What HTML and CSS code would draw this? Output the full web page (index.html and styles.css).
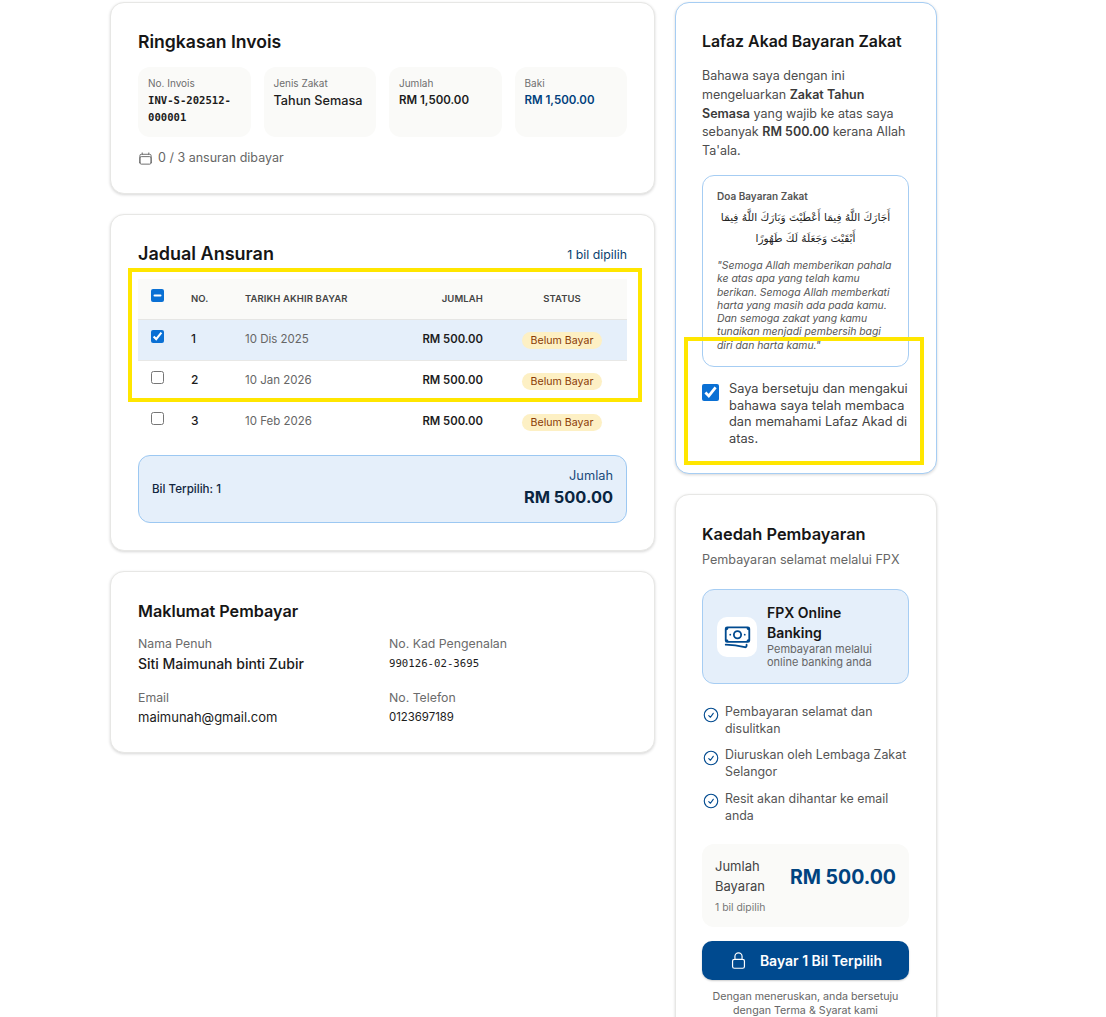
FILE: index.html
```html
<!DOCTYPE html>
<html lang="ms">
<head>
<meta charset="utf-8">
<title>Ringkasan Invois</title>
<link rel="stylesheet" href="styles.css">
</head>
<body>
<main class="page">
  <div class="col-left">
    <section class="card card-invoice">
      <h2 class="title">Ringkasan Invois</h2>
      <div class="tiles">
        <div class="tile"><div class="tile-label">No. Invois</div><div class="tile-value mono">INV-S-202512-000001</div></div>
        <div class="tile"><div class="tile-label">Jenis Zakat</div><div class="tile-value">Tahun Semasa</div></div>
        <div class="tile"><div class="tile-label">Jumlah</div><div class="tile-value strong">RM 1,500.00</div></div>
        <div class="tile"><div class="tile-label">Baki</div><div class="tile-value strong navy">RM 1,500.00</div></div>
      </div>
      <div class="progress">
        <svg class="cal" viewBox="0 0 24 24" width="15" height="15" fill="none" stroke="#666" stroke-width="1.5" stroke-linecap="round" stroke-linejoin="round"><path d="M6.75 3v2.25M17.25 3v2.25M3 18.75V7.5a2.25 2.25 0 0 1 2.25-2.25h13.5A2.25 2.25 0 0 1 21 7.5v11.25m-18 0A2.25 2.25 0 0 0 5.25 21h13.5A2.25 2.25 0 0 0 21 18.75m-18 0v-7.5A2.25 2.25 0 0 1 5.25 9h13.5A2.25 2.25 0 0 1 21 11.25v7.5"/></svg>
        <span>0 / 3 ansuran dibayar</span>
      </div>
    </section>

    <section class="card card-schedule">
      <div class="head-row">
        <h2 class="title title-lg">Jadual Ansuran</h2>
        <span class="head-note">1 bil dipilih</span>
      </div>
      <table class="table">
        <thead>
          <tr>
            <th class="c-check"><input type="checkbox" id="all" class="box"></th>
            <th class="c-no">NO.</th>
            <th class="c-date">TARIKH AKHIR BAYAR</th>
            <th class="c-amt">JUMLAH</th>
            <th class="c-status">STATUS</th>
          </tr>
        </thead>
        <tbody>
          <tr class="selected">
            <td class="c-check"><input type="checkbox" class="box" checked></td>
            <td class="c-no">1</td><td class="c-date">10 Dis 2025</td><td class="c-amt">RM 500.00</td>
            <td class="c-status"><span class="pill">Belum Bayar</span></td>
          </tr>
          <tr>
            <td class="c-check"><input type="checkbox" class="box"></td>
            <td class="c-no">2</td><td class="c-date">10 Jan 2026</td><td class="c-amt">RM 500.00</td>
            <td class="c-status"><span class="pill">Belum Bayar</span></td>
          </tr>
          <tr class="last">
            <td class="c-check"><input type="checkbox" class="box"></td>
            <td class="c-no">3</td><td class="c-date">10 Feb 2026</td><td class="c-amt">RM 500.00</td>
            <td class="c-status"><span class="pill">Belum Bayar</span></td>
          </tr>
        </tbody>
      </table>
      <div class="selection">
        <span class="sel-count">Bil Terpilih: 1</span>
        <div class="sel-total"><div class="sel-label">Jumlah</div><div class="sel-amount">RM 500.00</div></div>
      </div>
    </section>

    <section class="card card-payer">
      <h2 class="title title-sm">Maklumat Pembayar</h2>
      <div class="payer-grid">
        <div><div class="f-label">Nama Penuh</div><div class="f-value f-name">Siti Maimunah binti Zubir</div></div>
        <div><div class="f-label">No. Kad Pengenalan</div><div class="f-value mono f-ic">990126-02-3695</div></div>
        <div><div class="f-label">Email</div><div class="f-value">maimunah@gmail.com</div></div>
        <div><div class="f-label">No. Telefon</div><div class="f-value f-tel">0123697189</div></div>
      </div>
    </section>
  </div>

  <div class="col-right">
    <section class="card card-akad">
      <h2 class="title title-side">Lafaz Akad Bayaran Zakat</h2>
      <p class="akad-text">Bahawa saya dengan ini mengeluarkan <b>Zakat Tahun Semasa</b> yang wajib ke atas saya sebanyak <b>RM 500.00</b> kerana Allah Ta'ala.</p>
      <div class="doa">
        <div class="doa-label">Doa Bayaran Zakat</div>
        <p class="arabic" dir="rtl" lang="ar">أَجَارَكَ اللَّهُ فِيمَا أَعْطَيْتَ وَبَارَكَ اللَّهُ فِيمَا أَبْقَيْتَ وَجَعَلَهُ لَكَ طَهُورًا</p>
        <p class="doa-trans">"Semoga Allah memberikan pahala ke atas apa yang telah kamu berikan. Semoga Allah memberkati harta yang masih ada pada kamu. Dan semoga zakat yang kamu tunaikan menjadi pembersih bagi diri dan harta kamu."</p>
      </div>
      <label class="agree">
        <input type="checkbox" class="box box-lg" checked>
        <span>Saya bersetuju dan mengakui bahawa saya telah membaca dan memahami Lafaz Akad di atas.</span>
      </label>
    </section>

    <section class="card card-pay">
      <h2 class="title title-pay">Kaedah Pembayaran</h2>
      <p class="pay-sub">Pembayaran selamat melalui FPX</p>
      <div class="fpx">
        <div class="fpx-icon">
          <svg viewBox="0 0 24 24" width="29" height="29" fill="none" stroke="#004a8f" stroke-width="1.5" stroke-linecap="round" stroke-linejoin="round"><path d="M2.25 18.75a60.07 60.07 0 0 1 15.797 2.101c.727.198 1.453-.342 1.453-1.096V18.75M3.75 4.5v.75A.75.75 0 0 1 3 6h-.75m0 0v-.375c0-.621.504-1.125 1.125-1.125H20.25M2.25 6v9m18-10.5v.75c0 .414.336.75.75.75h.75m-1.5-1.5h.375c.621 0 1.125.504 1.125 1.125v9.75c0 .621-.504 1.125-1.125 1.125h-.375m1.5-1.5H21a.75.75 0 0 0-.75.75v.75m0 0H3.75m0 0h-.375a1.125 1.125 0 0 1-1.125-1.125V15m1.5 1.5v-.75A.75.75 0 0 0 3 15h-.75M15 10.5a3 3 0 1 1-6 0 3 3 0 0 1 6 0Zm3 0h.008v.008H18V10.5Zm-12 0h.008v.008H6V10.5Z"/></svg>
        </div>
        <div class="fpx-text">
          <div class="fpx-name">FPX Online Banking</div>
          <div class="fpx-desc">Pembayaran melalui online banking anda</div>
        </div>
      </div>
      <ul class="points">
        <li><svg class="tick" viewBox="0 0 24 24" width="18" height="18" fill="none" stroke="#004a8f" stroke-width="1.5" stroke-linecap="round" stroke-linejoin="round"><path d="M9 12.75 11.25 15 15 9.75M21 12a9 9 0 1 1-18 0 9 9 0 0 1 18 0Z"/></svg><span>Pembayaran selamat dan disulitkan</span></li>
        <li><svg class="tick" viewBox="0 0 24 24" width="18" height="18" fill="none" stroke="#004a8f" stroke-width="1.5" stroke-linecap="round" stroke-linejoin="round"><path d="M9 12.75 11.25 15 15 9.75M21 12a9 9 0 1 1-18 0 9 9 0 0 1 18 0Z"/></svg><span>Diuruskan oleh Lembaga Zakat Selangor</span></li>
        <li><svg class="tick" viewBox="0 0 24 24" width="18" height="18" fill="none" stroke="#004a8f" stroke-width="1.5" stroke-linecap="round" stroke-linejoin="round"><path d="M9 12.75 11.25 15 15 9.75M21 12a9 9 0 1 1-18 0 9 9 0 0 1 18 0Z"/></svg><span>Resit akan dihantar ke email anda</span></li>
      </ul>
      <div class="total">
        <div class="total-left">
          <div class="total-label">Jumlah Bayaran</div>
          <div class="total-note">1 bil dipilih</div>
        </div>
        <div class="total-amount">RM 500.00</div>
      </div>
      <button class="pay-btn" type="button">
        <svg viewBox="0 0 24 24" width="19" height="19" fill="none" stroke="#fff" stroke-width="1.5" stroke-linecap="round" stroke-linejoin="round"><path d="M16.5 10.5V6.75a4.5 4.5 0 1 0-9 0v3.75m-.75 11.25h10.5a2.25 2.25 0 0 0 2.25-2.25v-6.75a2.25 2.25 0 0 0-2.25-2.25H6.75a2.25 2.25 0 0 0-2.25 2.25v6.75a2.25 2.25 0 0 0 2.25 2.25Z"/></svg>
        <span>Bayar 1 Bil Terpilih</span>
      </button>
      <p class="fine">Dengan meneruskan, anda bersetuju dengan Terma &amp; Syarat kami</p>
    </section>
  </div>

  <div class="hl hl-table"></div>
  <div class="hl hl-agree"></div>
</main>
<script src="script.js"></script>
</body>
</html>
```

FILE: styles.css
```css
* { box-sizing: border-box; }
html, body { margin: 0; height: 1017px; overflow: hidden; background: #fff; }
body { font-family: Inter, "Noto Sans", sans-serif; color: #1c1c1c; font-size: 12px; }
h2, p, ul { margin: 0; padding: 0; }

.page { position: relative; display: flex; align-items: flex-start; gap: 20px; width: 827px; margin-left: 110px; padding-top: 2px; }
.col-left { width: 545px; display: flex; flex-direction: column; gap: 20px; flex: none; }
.col-right { width: 262px; display: flex; flex-direction: column; gap: 20px; flex: none; }

.card { background: #fff; border: 1px solid #e7e7e5; border-radius: 14px; box-shadow: 0 1px 3px rgba(0,0,0,.16); padding: 27px; }

.title { font-size: 17.6px; line-height: 24px; font-weight: 600; color: #161616; }
.title-lg { font-size: 18px; }
.title-sm { font-size: 16.2px; line-height: 22px; }
.title-side { font-size: 15.9px; line-height: 22px; }
.title-pay { font-size: 16.4px; line-height: 22px; }

.mono { font-family: "DejaVu Sans Mono", "Liberation Mono", monospace; }

.card-invoice { height: 192px; }
.tiles { display: grid; grid-template-columns: repeat(4, 1fr); gap: 13px; margin-top: 13px; }
.tile { background: #fafaf8; border-radius: 12px; padding: 9px 10px 10px; height: 70px; }
.tile-label { font-size: 10px; line-height: 14px; color: #6e6e6e; }
.tile-value { font-size: 12.7px; line-height: 17px; margin-top: 2px; color: #1c1c1c; font-weight: 500; }
.tile-value.mono { font-size: 10.6px; font-weight: 700; }
.tile-value.strong { font-size: 11.5px; font-weight: 600; }
.tile-value.navy { color: #00407c; }
.progress { display: flex; align-items: center; gap: 5px; margin-top: 12px; color: #666; font-size: 12.5px; line-height: 18px; }
.cal { flex: none; }

.card-schedule { height: 337px; }
.head-row { display: flex; justify-content: space-between; align-items: center; height: 24px; }
.head-note { font-size: 12.3px; color: #0a3f6e; font-weight: 400; }
.table { width: 489px; border-collapse: collapse; table-layout: fixed; margin-top: 13px; }
.table th { height: 40px; background: #fafaf8; border-bottom: 1px solid #e6e6e4; font-size: 9.5px; font-weight: 600; color: #444; letter-spacing: .1px; }
.table td { height: 41px; border-bottom: 1px solid #e8e8e6; font-size: 12px; }
.table tr.last td { border-bottom: 0; }
.table tr.selected td { background: #e5effa; }
.c-check { width: 38px; padding: 0; text-align: center; vertical-align: middle; }
th.c-check { padding-bottom: 6px; }
td.c-check { padding-bottom: 8px; }
.c-no { width: 59px; padding: 0 0 0 15px; text-align: left; font-weight: 500; }
td.c-no { padding-bottom: 2px; }
.table th.c-date, .table td.c-date { width: 170px; padding: 0 0 0 10px; text-align: left; }
.table td.c-date { color: #666; font-size: 11.5px; padding-bottom: 2px; }
.c-amt { width: 92px; padding: 0 14px 0 0; text-align: right; font-weight: 600; }
.table td.c-amt { font-size: 11.3px; padding-bottom: 2px; }
.c-status { padding: 0; text-align: center; }
.pill { display: inline-block; background: #fdf0c4; color: #8a3b05; border-radius: 9px; font-size: 10.6px; line-height: 17px; width: 80px; white-space: nowrap; position: relative; top: 1px; }
.box { margin: 0; width: 13px; height: 13px; accent-color: #0a70d4; vertical-align: middle; }
.box-lg { width: 17px; height: 17px; flex: none; margin-top: 3px; }

.selection { display: flex; justify-content: space-between; align-items: center; height: 68px; margin-top: 13px; padding: 0 13px; background: #e5effa; border: 1px solid #9cc8f2; border-radius: 12px; }
.sel-count { font-size: 11.6px; font-weight: 500; color: #12263f; }
.sel-total { text-align: right; }
.sel-label { font-size: 12.8px; line-height: 16px; color: #1a4a7a; }
.sel-amount { font-size: 16.4px; line-height: 26px; font-weight: 700; color: #0a2540; }

.card-payer { height: 182px; padding-top: 28px; }
.payer-grid { display: grid; grid-template-columns: 251px 1fr; row-gap: 15px; margin-top: 13px; }
.f-label { font-size: 12.3px; line-height: 17px; color: #6b6b6b; }
.f-value { font-size: 13px; line-height: 19px; margin-top: 2px; color: #1c1c1c; }
.f-name { font-size: 14px; font-weight: 500; line-height: 20px; }
.f-ic { font-size: 10.7px; }
.f-tel { font-size: 11.4px; }

.card-akad { height: 472px; border-color: #a6cdf3; padding: 28px 27px 0 26px; }
.akad-text { margin-top: 14px; font-size: 12.5px; line-height: 18.8px; color: #4d4d4d; }
.akad-text b { font-weight: 600; color: #3a3a3a; }
.doa { margin-top: 14px; height: 192px; border: 1px solid #a6cdf3; border-radius: 12px; padding: 13px 14px; overflow: hidden; }
.doa-label { font-size: 10px; line-height: 14px; font-weight: 600; color: #555; }
.arabic { font-family: "DejaVu Sans", sans-serif; font-size: 10.6px; line-height: 21px; text-align: center; color: #222; margin-top: 4px; }
.doa-trans { font-style: italic; font-size: 10.4px; line-height: 13.3px; color: #555; margin-top: 10px; }
.agree { display: flex; gap: 10px; margin-top: 14px; font-size: 12.8px; line-height: 16.6px; color: #444; }

.card-pay { padding: 28px 27px 20px 26px; min-height: 560px; }
.pay-sub { margin-top: 6px; font-size: 12.6px; line-height: 18px; color: #666; }
.fpx { display: flex; align-items: center; gap: 10px; margin-top: 20px; height: 95px; padding: 0 14px; background: #e5effa; border: 1px solid #a6cdf3; border-radius: 12px; }
.fpx-icon { width: 40px; height: 40px; flex: none; background: #fff; border-radius: 10px; display: flex; align-items: center; justify-content: center; }
.fpx-text { padding-bottom: 2px; }
.fpx-name { font-size: 14px; line-height: 20px; font-weight: 600; color: #161616; }
.fpx-desc { font-size: 11px; line-height: 13px; color: #666; }
.points { list-style: none; margin-top: 20px; display: flex; flex-direction: column; gap: 10px; }
.points li { display: flex; gap: 5px; font-size: 12.4px; line-height: 16.7px; color: #555; }
.tick { flex: none; margin-top: 1.5px; }
.total { display: flex; justify-content: space-between; align-items: flex-start; margin-top: 20px; height: 83px; padding: 12px 13px; background: #fafaf8; border-radius: 12px; }
.total-label { width: 66px; font-size: 13px; line-height: 20px; color: #444; }
.total-note { font-size: 10.4px; line-height: 14px; color: #777; margin-top: 5px; }
.total-amount { font-size: 19.5px; line-height: 26px; font-weight: 700; color: #00437f; margin-top: 8px; white-space: nowrap; }
.pay-btn { display: flex; align-items: center; justify-content: center; gap: 12px; width: 100%; height: 39px; margin-top: 14px; background: #004a8f; color: #fff; border: 0; border-radius: 10px; font: 600 14px/1 Inter, sans-serif; box-shadow: 0 1px 2px rgba(0,0,0,.2); }
.fine { margin-top: 10px; font-size: 10.7px; line-height: 13.5px; text-align: center; color: #666; }

.hl { position: absolute; border: 4px solid #ffe600; pointer-events: none; }
.hl-table { left: 18px; top: 268px; width: 514px; height: 134px; }
.hl-agree { left: 574px; top: 337px; width: 240px; height: 128px; }
```

FILE: script.js
```js
document.getElementById('all').indeterminate = true;
```
